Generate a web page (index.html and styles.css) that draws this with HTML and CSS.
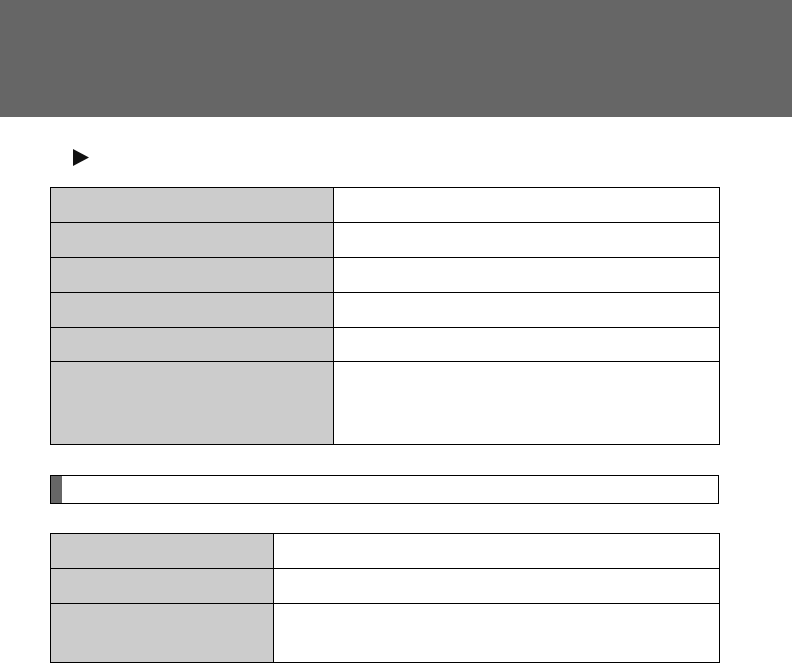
FILE: index.html
```html
<!DOCTYPE html>
<html>
<head>
<meta charset="utf-8">
<link rel="stylesheet" href="styles.css">
</head>
<body>
<header class="banner"></header>
<main class="content">
  <div class="marker">
    <svg class="arrow" width="16" height="17" viewBox="0 0 16 17"><polygon points="0,0 16,8.5 0,17" fill="#111"/></svg>
  </div>
  <div class="spec spec-a">
    <div class="cell key r35"></div><div class="cell val r35"></div>
    <div class="cell key r35"></div><div class="cell val r35"></div>
    <div class="cell key r35"></div><div class="cell val r35"></div>
    <div class="cell key r35"></div><div class="cell val r35"></div>
    <div class="cell key r34"></div><div class="cell val r34"></div>
    <div class="cell key r83"></div><div class="cell val r83"></div>
  </div>
  <div class="section-bar"><span class="section-tab"></span></div>
  <div class="spec spec-b">
    <div class="cell key r35"></div><div class="cell val r35"></div>
    <div class="cell key r35"></div><div class="cell val r35"></div>
    <div class="cell key r59"></div><div class="cell val r59"></div>
  </div>
</main>
</body>
</html>
```

FILE: styles.css
```css
html, body {
  margin: 0;
  padding: 0;
  background: #fff;
  font-family: "Liberation Sans", Arial, sans-serif;
}
.banner {
  height: 117px;
  background: #666666;
}
.content {
  padding-left: 50px;
  display: flex;
  flex-direction: column;
  align-items: flex-start;
}
.marker {
  margin-top: 32px;
  padding-left: 23px;
  height: 17px;
}
.arrow { display: block; }
.spec {
  display: grid;
  border-top: 1px solid #000;
  border-left: 1px solid #000;
}
.spec-a {
  margin-top: 21px;
  grid-template-columns: 283px 386px;
}
.spec-b {
  margin-top: 29px;
  grid-template-columns: 223px 446px;
}
.cell {
  border-right: 1px solid #000;
  border-bottom: 1px solid #000;
  box-sizing: border-box;
}
.key { background: #cccccc; }
.val { background: #fff; }
.r35 { height: 35px; }
.r34 { height: 34px; }
.r83 { height: 83px; }
.r59 { height: 59px; }
.section-bar {
  margin-top: 30px;
  width: 669px;
  height: 29px;
  box-sizing: border-box;
  border: 1px solid #000;
  display: flex;
}
.section-tab {
  width: 11px;
  background: #666666;
}
```
